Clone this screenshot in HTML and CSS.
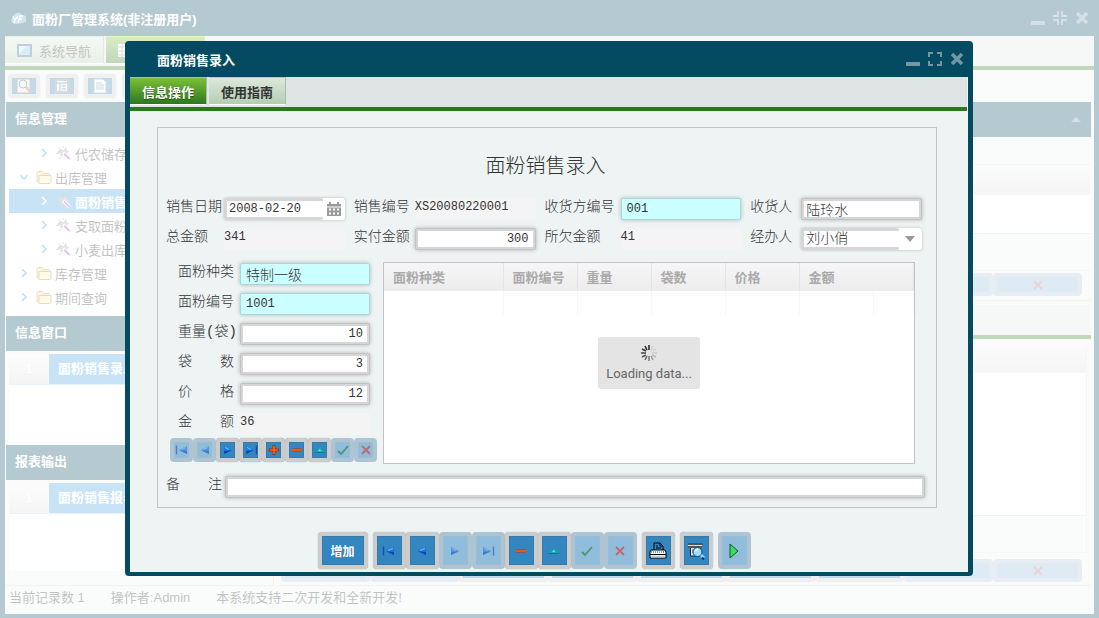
FILE: index.html
```html
<!DOCTYPE html>
<html lang="zh-CN">
<head>
  <meta charset="UTF-8">
  <meta name="viewport" content="width=device-width, initial-scale=1.0">
  <title>面粉厂管理系统</title>
  <link rel="stylesheet" href="styles.css">
</head>
<body>
  <svg class="sprite" aria-hidden="true">
    <symbol id="i-first" viewBox="0 0 14 14"><path d="M1.5 2.5v9" stroke="#0a50b8" stroke-width="1.4"/><path d="M4 7l8-4v8z" fill="#1878e8"/><path d="M4 7.200l8 3.800V8z" fill="#0848a8"/><path d="M6 6.500l5-2" stroke="#7cc0ff"/></symbol>
    <symbol id="i-prev" viewBox="0 0 14 14"><path d="M3 7l8-4v8z" fill="#1878e8"/><path d="M3 7.200l8 3.800V8z" fill="#0848a8"/><path d="M5 6.500l5-2" stroke="#7cc0ff"/></symbol>
    <symbol id="i-next" viewBox="0 0 14 14"><path d="M11 7L3 3v8z" fill="#1878e8"/><path d="M11 7.200L3 11V8z" fill="#0848a8"/><path d="M4 4.500l4 2" stroke="#7cc0ff"/></symbol>
    <symbol id="i-last" viewBox="0 0 14 14"><path d="M12.500 2.500v9" stroke="#0a50b8" stroke-width="1.4"/><path d="M10 7L2 3v8z" fill="#1878e8"/><path d="M10 7.200L2 11V8z" fill="#0848a8"/><path d="M3 4.500l4 2" stroke="#7cc0ff"/></symbol>
    <symbol id="i-add" viewBox="0 0 14 14"><path d="M7 2v10M2 7h10" stroke="#c22800" stroke-width="3"/><path d="M7 3v8M3 7h8" stroke="#ff7a10" stroke-width="1.200"/></symbol>
    <symbol id="i-del" viewBox="0 0 14 14"><path d="M2 7h10" stroke="#d02800" stroke-width="3"/><path d="M2 7h10" stroke="#ff8a18"/></symbol>
    <symbol id="i-edit" viewBox="0 0 14 14"><path d="M7 4.500L2 9.500h10z" fill="#10b0b8"/><path d="M2 9.500h10" stroke="#087880"/><path d="M7 6L5 8h3z" fill="#6ae8e8"/></symbol>
    <symbol id="i-ok" viewBox="0 0 14 14"><path d="M2 8l3 3 7-8" fill="none" stroke="#107820" stroke-width="1.800"/></symbol>
    <symbol id="i-cancel" viewBox="0 0 14 14"><path d="M3 3l8 8M11 3l-8 8" stroke="#e02818" stroke-width="1.800"/></symbol>
    <symbol id="i-print" viewBox="0 0 18 18"><path d="M5 8V1h6l3 3v4" fill="#3486c0" stroke="#000"/><path d="M11 1v3h3M7 4h2M7 6h5" fill="none" stroke="#000"/><path d="M2 8h14l1 2v6H1v-6z" fill="#fff" stroke="#000"/><path d="M2 10h14" stroke="#58b8e8" stroke-dasharray="1 1" stroke-width="2"/><path d="M1 12.500h16" stroke="#000"/><path d="M2 14.500h14" stroke="#ccc" stroke-width="2"/><path d="M14 10h1" stroke="#e02020"/></symbol>
    <symbol id="i-preview" viewBox="0 0 18 18"><path d="M1 2h15M1 5h14" stroke="#555" stroke-width="2"/><path d="M1 3.500h14" stroke="#ddd"/><path d="M3.500 6v8h10V6" fill="#dfe6ea" stroke="#222"/><path d="M5 8h3M5 10h2" stroke="#3486c0"/><circle cx="10.500" cy="10" r="4.500" fill="#9fdcff" stroke="#064c78"/><path d="M8 9l3-2" stroke="#fff" stroke-width="2"/><path d="M14 13l3 3" stroke="#8fd4ff" stroke-width="3"/><path d="M15 16l2 1" stroke="#062c48" stroke-width="2"/></symbol>
    <symbol id="i-run" viewBox="0 0 18 18"><path d="M5 2v14l8-7z" fill="#30e050" stroke="#0a4a20"/></symbol>
    <symbol id="i-min" viewBox="0 0 16 16"><path d="M1 13h14" stroke="currentColor" stroke-width="4"/></symbol>
    <symbol id="i-max" viewBox="0 0 16 16"><path d="M2 6V2h4M10 2h4v4M14 10v4h-4M6 14H2v-4" fill="none" stroke="currentColor" stroke-width="2"/></symbol>
    <symbol id="i-restore" viewBox="0 0 16 16"><path d="M6 1v5H1M10 1v5h5M10 15v-5h5M6 15v-5H1" fill="none" stroke="currentColor" stroke-width="2"/></symbol>
    <symbol id="i-close" viewBox="0 0 16 16"><path d="M3 3l10 10M13 3L3 13" stroke="currentColor" stroke-width="3.500"/></symbol>
    <symbol id="i-wand" viewBox="0 0 16 16"><path d="M2 5l3-2 2 2 3-4 1 4 3 0-3 3-1 2-3-1-2 4-1-5-3-1z" fill="#999"/><path d="M2 2l2 2M7 0v2M0 8h2M3 12l1 2" stroke="#777"/><path d="M7 7l7 7" stroke="#fff" stroke-width="4"/><path d="M8 8l6 6" stroke="#a03cd8" stroke-width="2"/></symbol>
    <symbol id="i-folder" viewBox="0 0 16 14"><path d="M1 11V2l1-1h4l2 2h5l1 1v8H2z" fill="#f5df90" stroke="#b08a30"/><path d="M3 5h12v7l-1 1H3z" fill="#fff0a8" stroke="#b08a30"/></symbol>
    <symbol id="i-chev" viewBox="0 0 8 8"><path d="M2 0l4 4-4 4" fill="none" stroke="currentColor" stroke-width="1.500"/></symbol>
  </svg>

  <div class="app">
    <header class="titlebar">
      <svg class="logo" viewBox="0 0 16 16"><path d="M4 14a4 4 0 0 1-1-7 5 5 0 0 1 9-2 4 4 0 0 1 1 8z" fill="#5fa8d8"/><path d="M3 6l2 4 3-4M5 10l-1 3M8 13l2-7h3M9 9h3" fill="none" stroke="#fff" stroke-width="1.500"/></svg>
      <h1>面粉厂管理系统(非注册用户)</h1>
      <div class="window-tools">
        <button aria-label="最小化"><svg><use href="#i-min"/></svg></button>
        <button aria-label="还原"><svg><use href="#i-restore"/></svg></button>
        <button aria-label="关闭"><svg><use href="#i-close"/></svg></button>
      </div>
    </header>
    <nav class="tabs">
      <button class="tab app-tab"><svg viewBox="0 0 15 13"><path d="M1 1h13v11H1z" fill="#7cc0ee" stroke="#2c5f88" stroke-width="2"/><path d="M2 2h8l-8 8z" fill="#c8e8fa"/></svg>系统导航</button>
      <button class="tab app-tab active" aria-label="信息管理"><svg viewBox="0 0 15 13"><path d="M0 0h15v13H0z" fill="#fff"/><path d="M0 3h15M0 7h15M0 11h15M4 0v13M8 0v13M12 0v13" stroke="#88a"/></svg></button>
    </nav>

    <main class="workspace">
      <aside class="sidebar">
        <div class="quickbar">
          <button class="btn quick" aria-label="查询"><svg viewBox="0 0 16 16"><path d="M1 1h13v14H1z" fill="#e8e8e0" stroke="#666"/><circle cx="7" cy="6" r="4" fill="#c8ecff" stroke="#456"/><path d="M10 9l4 5" stroke="#d86030" stroke-width="2.500"/></svg></button>
          <button class="btn quick" aria-label="表格"><svg viewBox="0 0 16 16"><path d="M2 2h12v12H2z" fill="#d8ecf8" stroke="#888" stroke-width="2"/><path d="M2 5h12M6 5v9M8 8h4M8 11h4" stroke="#467"/></svg></button>
          <button class="btn quick" aria-label="文档"><svg viewBox="0 0 16 16"><path d="M2 1h9l3 3v11H2z" fill="#f4faff" stroke="#78a"/><path d="M4 5h6M4 7h8M4 9h8M4 11h8" stroke="#58a"/></svg></button>
          <button class="btn quick" aria-label="打印"><svg><use href="#i-print"/></svg></button>
        </div>
        <h2 class="panel-title">信息管理</h2>
        <ul class="tree">
          <li class="leaf"><svg class="chev"><use href="#i-chev"/></svg><svg class="ico"><use href="#i-wand"/></svg><a href="#">代农储存</a></li>
          <li><svg class="chev open"><use href="#i-chev"/></svg><svg class="ico"><use href="#i-folder"/></svg><a href="#">出库管理</a></li>
          <li class="leaf selected"><svg class="chev"><use href="#i-chev"/></svg><svg class="ico"><use href="#i-wand"/></svg><a href="#">面粉销售</a></li>
          <li class="leaf"><svg class="chev"><use href="#i-chev"/></svg><svg class="ico"><use href="#i-wand"/></svg><a href="#">支取面粉</a></li>
          <li class="leaf"><svg class="chev"><use href="#i-chev"/></svg><svg class="ico"><use href="#i-wand"/></svg><a href="#">小麦出库</a></li>
          <li><svg class="chev"><use href="#i-chev"/></svg><svg class="ico"><use href="#i-folder"/></svg><a href="#">库存管理</a></li>
          <li><svg class="chev"><use href="#i-chev"/></svg><svg class="ico"><use href="#i-folder"/></svg><a href="#">期间查询</a></li>
        </ul>
        <h2 class="panel-title">信息窗口</h2>
        <div class="list">
          <div class="list-row"><span class="num">1</span><a href="#">面粉销售录入</a></div>
        </div>
        <h2 class="panel-title">报表输出</h2>
        <div class="list reports">
          <div class="list-row"><span class="num">1</span><a href="#">面粉销售报表</a></div>
        </div>
      </aside>

      <section class="content">
        <div class="content-gap"></div>
        <h2 class="panel-title collapse"><span class="arrow-up"></span></h2>
        <div class="upper">
          <div class="grid-bar"></div>
          <div class="grid-head"></div>
          <div class="grid-rows short"></div>
          <div class="grid-foot"></div>
          <div class="record-bar">
            <button class="btn" aria-label="首条"><svg><use href="#i-first"/></svg></button>
            <button class="btn" aria-label="上条"><svg><use href="#i-prev"/></svg></button>
            <button class="btn" aria-label="下条"><svg><use href="#i-next"/></svg></button>
            <button class="btn" aria-label="末条"><svg><use href="#i-last"/></svg></button>
            <button class="btn" aria-label="增加"><svg><use href="#i-add"/></svg></button>
            <button class="btn" aria-label="删除"><svg><use href="#i-del"/></svg></button>
            <button class="btn" aria-label="修改"><svg><use href="#i-edit"/></svg></button>
            <button class="btn" disabled aria-label="保存"></button>
            <button class="btn" disabled aria-label="取消"><svg><use href="#i-cancel"/></svg></button>
          </div>
        </div>
        <div class="tabs sub"></div>
        <div class="lower">
          <div class="grid-head"></div>
          <div class="grid-rows"></div>
          <div class="grid-foot"></div>
        </div>
        <div class="record-bar">
          <button class="btn" disabled aria-label="首条"></button>
          <button class="btn" disabled aria-label="上条"></button>
          <button class="btn" aria-label="下条"></button>
          <button class="btn" aria-label="末条"></button>
          <button class="btn" aria-label="增加"></button>
          <button class="btn" aria-label="删除"></button>
          <button class="btn" aria-label="修改"></button>
          <button class="btn" disabled aria-label="保存"></button>
          <button class="btn" disabled aria-label="取消"><svg><use href="#i-cancel"/></svg></button>
        </div>
      </section>
    </main>

    <footer class="statusbar">
      <span>当前记录数 1</span>
      <span>操作者:Admin</span>
      <span>本系统支持二次开发和全新开发!</span>
    </footer>
  </div>

  <div class="mask">
    <div class="dialog" role="dialog" aria-labelledby="dlg-title">
      <header class="dialog-head">
        <h2 id="dlg-title">面粉销售录入</h2>
        <div class="window-tools">
          <button aria-label="最小化"><svg><use href="#i-min"/></svg></button>
          <button aria-label="最大化"><svg><use href="#i-max"/></svg></button>
          <button aria-label="关闭"><svg><use href="#i-close"/></svg></button>
        </div>
      </header>
      <div class="dialog-body">
        <nav class="tabs">
          <button class="tab active">信息操作</button>
          <button class="tab">使用指南</button>
        </nav>
        <form class="sheet">
          <h3>面粉销售录入</h3>
          <div class="fields">
            <label for="date">销售日期</label>
            <div class="combo"><input id="date" type="text" value="2008-02-20"><button type="button" aria-label="选择日期"><svg class="cal" viewBox="0 0 16 16"><path d="M1 3h14v12H1z" fill="#999"/><path d="M1 6h14" stroke="#fff"/><path d="M4 1v3M12 1v3" stroke="#999" stroke-width="2"/><path d="M3 8.500h10M3 12.500h10" stroke="#fff" stroke-width="2" stroke-dasharray="2 2"/></svg></button></div>
            <label for="no">销售编号</label>
            <output id="no">XS20080220001</output>
            <label for="party">收货方编号</label>
            <input id="party" class="key" type="text" value="001">
            <label for="receiver">收货人</label>
            <input id="receiver" type="text" value="陆玲水">

            <label for="total">总金额</label>
            <output id="total">341</output>
            <label for="paid">实付金额</label>
            <input id="paid" class="number" type="text" value="300">
            <label for="owed">所欠金额</label>
            <output id="owed">41</output>
            <label for="agent">经办人</label>
            <div class="combo drop"><select id="agent"><option>刘小俏</option></select></div>
          </div>

          <div class="detail">
            <div class="detail-form">
              <div class="line"><label for="kind">面粉种类</label><input id="kind" class="key" type="text" value="特制一级"></div>
              <div class="line"><label for="code">面粉编号</label><input id="code" class="key" type="text" value="1001"></div>
              <div class="line"><label for="weight">重量(袋)</label><input id="weight" class="number" type="text" value="10"></div>
              <div class="line"><label for="bags" class="spread">袋数</label><input id="bags" class="number" type="text" value="3"></div>
              <div class="line"><label for="price" class="spread">价格</label><input id="price" class="number" type="text" value="12"></div>
              <div class="line"><label for="amount" class="spread">金额</label><output id="amount">36</output></div>
              <div class="mini-bar">
                <button type="button" class="btn" disabled aria-label="首条"><svg><use href="#i-first"/></svg></button>
                <button type="button" class="btn" disabled aria-label="上条"><svg><use href="#i-prev"/></svg></button>
                <button type="button" class="btn" aria-label="下条"><svg><use href="#i-next"/></svg></button>
                <button type="button" class="btn" aria-label="末条"><svg><use href="#i-last"/></svg></button>
                <button type="button" class="btn" aria-label="增加"><svg><use href="#i-add"/></svg></button>
                <button type="button" class="btn" aria-label="删除"><svg><use href="#i-del"/></svg></button>
                <button type="button" class="btn" aria-label="修改"><svg><use href="#i-edit"/></svg></button>
                <button type="button" class="btn" disabled aria-label="保存"><svg><use href="#i-ok"/></svg></button>
                <button type="button" class="btn" disabled aria-label="取消"><svg><use href="#i-cancel"/></svg></button>
              </div>
            </div>
            <div class="detail-grid">
              <table>
                <colgroup><col class="c-kind"><col class="c-num"><col class="c-num"><col class="c-num"><col class="c-num"><col class="c-num"><col></colgroup>
                <thead>
                  <tr><th>面粉种类</th><th>面粉编号</th><th>重量</th><th>袋数</th><th>价格</th><th colspan="2">金额</th></tr>
                </thead>
                <tbody>
                  <tr><td></td><td></td><td></td><td></td><td></td><td></td><td></td></tr>
                </tbody>
              </table>
              <div class="loading">
                <svg viewBox="0 0 16 16" stroke-width="1.500"><path d="M8 0v5" stroke="#222"/><path d="M4 1l2 4" stroke="#222"/><path d="M1 4l4 2" stroke="#333"/><path d="M0 8h5" stroke="#444"/><path d="M1 12l4-2" stroke="#555"/><path d="M4 15l2-4" stroke="#666"/><path d="M8 16v-5" stroke="#777"/><path d="M12 15l-2-4" stroke="#999"/><path d="M15 12l-4-2" stroke="#bbb"/><path d="M16 8h-5" stroke="#ccc"/><path d="M15 4l-4 2M12 1l-2 4" stroke="#d4d4d4"/></svg>
                <span>Loading data...</span>
              </div>
            </div>
          </div>

          <div class="memo">
            <label for="memo" class="spread">备注</label>
            <input id="memo" type="text">
          </div>
        </form>

        <div class="actions">
          <div class="group"><button class="btn text">增加</button></div>
          <div class="group">
            <button class="btn" aria-label="首条"><svg><use href="#i-first"/></svg></button>
            <button class="btn" aria-label="上条"><svg><use href="#i-prev"/></svg></button>
            <button class="btn" disabled aria-label="下条"><svg><use href="#i-next"/></svg></button>
            <button class="btn" disabled aria-label="末条"><svg><use href="#i-last"/></svg></button>
            <button class="btn" aria-label="删除"><svg><use href="#i-del"/></svg></button>
            <button class="btn" aria-label="修改"><svg><use href="#i-edit"/></svg></button>
            <button class="btn" disabled aria-label="保存"><svg><use href="#i-ok"/></svg></button>
            <button class="btn" disabled aria-label="取消"><svg><use href="#i-cancel"/></svg></button>
          </div>
          <div class="group"><button class="btn" aria-label="打印"><svg class="big"><use href="#i-print"/></svg></button></div>
          <div class="group"><button class="btn" aria-label="预览"><svg class="big"><use href="#i-preview"/></svg></button></div>
          <div class="group"><button class="btn" disabled aria-label="运行"><svg class="big solid"><use href="#i-run"/></svg></button></div>
        </div>
      </div>
    </div>
  </div>
</body>
</html>
```
FILE: styles.css
```css
* {
  box-sizing: border-box;
}
body {
  margin: 0;
  font-family: "Liberation Sans", "Noto Sans CJK SC", sans-serif;
  font-size: 13px;
  color: #333;
}
h1, h2, h3, ul {
  margin: 0;
  padding: 0;
}
button {
  font-family: inherit;
}
.sprite {
  display: none;
}

/* main window */
.app {
  display: flex;
  flex-direction: column;
  height: 100vh;
  overflow: hidden;
  border: solid #044b61;
  border-width: 0 5px 4px;
  background: #eef3f4;
}
.titlebar, .dialog-head {
  display: flex;
  align-items: center;
  background: #044b61;
}
.titlebar {
  height: 36px;
  padding: 0 4px 0 5px;
}
.titlebar h1, .dialog-head h2 {
  flex: 1;
  font-size: 13px;
  color: #fff;
}
.logo {
  width: 16px;
  height: 16px;
  margin-right: 6px;
}
.window-tools {
  display: flex;
  gap: 6px;
}
.window-tools button {
  padding: 0;
  border: 0;
  background: none;
  color: #7397a5;
}
.window-tools svg {
  display: block;
  width: 16px;
  height: 16px;
}

.tabs {
  display: flex;
  flex-shrink: 0;
  gap: 2px;
  height: 34px;
  border-bottom: 4px solid #2c781f;
  background: #dfe5e4;
}
.tab {
  height: 28px;
  padding: 0 12px;
  border: 0;
  border-top: 1px solid #b8cdb8;
  border-bottom: 1px solid #fff;
  border-right: 1px solid #a5bda5;
  background: linear-gradient(#dce8dc, #b4cdb2);
  color: #333;
  font-size: 13px;
  font-weight: bold;
}
.tab.active {
  border-top-color: #a0e020;
  background: linear-gradient(#7cc038, #2c781f);
  color: #fff;
  text-shadow: 0 1px 1px #225010;
}
.app-tab {
  display: flex;
  align-items: center;
  gap: 7px;
  width: 99px;
  font-weight: normal;
  white-space: nowrap;
}
.app-tab svg {
  flex-shrink: 0;
  width: 15px;
  height: 13px;
}

.workspace {
  display: grid;
  grid-template-columns: 268px 1fr;
  gap: 4px;
  flex: 1;
  min-height: 0;
  padding: 0 3px 0 1px;
}
.sidebar, .content {
  display: flex;
  flex-direction: column;
  border: 1px solid #d0d6d6;
  border-width: 0 1px 1px 0;
}
.content {
  border-right: 0;
}
.quickbar {
  display: flex;
  gap: 6px;
  padding: 4px 2px;
}
.panel-title {
  height: 35px;
  padding-left: 9px;
  background: #044b61;
  color: #fff;
  font-size: 13px;
  line-height: 34px;
}
.tree {
  padding: 4px 3px 7px;
  background: #fff;
  list-style: none;
}
.tree li {
  display: flex;
  align-items: center;
  height: 24px;
  padding-left: 11px;
}
.tree li.leaf {
  padding-left: 31px;
}
.tree a, .list a {
  color: inherit;
  text-decoration: none;
}
.chev {
  width: 8px;
  height: 8px;
  margin-right: 8px;
  color: #10a0e0;
}
.chev.open {
  transform: rotate(90deg);
}
.ico {
  width: 16px;
  height: 15px;
  margin-right: 3px;
}
.selected {
  background: #48a1e1;
  color: #fff;
  font-weight: bold;
}
.selected .chev {
  color: #fff;
}
.list {
  min-height: 88px;
  margin: 3px;
  background: #fff;
}
.reports {
  flex: 1;
  margin-bottom: 14px;
}
.list-row {
  display: grid;
  grid-template-columns: 40px 1fr;
  height: 31px;
  line-height: 29px;
  border-bottom: 1px solid #b8d8f0;
  background: #48a1e1;
  color: #fff;
}
.list-row a {
  padding-left: 9px;
  font-weight: bold;
}
.num {
  background: linear-gradient(#f6f6f6, #dcdcdc);
  text-align: center;
}

.content-gap {
  height: 32px;
}
.collapse {
  display: flex;
  align-items: center;
  justify-content: flex-end;
  padding-right: 10px;
}
.arrow-up {
  border: 5px solid transparent;
  border-top: 0;
  border-bottom-color: #7397a5;
}
.upper {
  border-bottom: 1px solid #d0d6d6;
  padding-bottom: 4px;
}
.grid-bar {
  height: 28px;
  border-bottom: 1px solid #dde2e2;
}
.grid-head {
  height: 30px;
  background: linear-gradient(#f2f2f2, #dedede);
}
.grid-rows {
  flex: 1;
  border-bottom: 1px solid #d0d6d6;
  background: #fff;
}
.grid-rows.short {
  height: 39px;
}
.grid-foot {
  height: 37px;
  border-bottom: 1px solid #dde2e2;
}
.sub {
  margin-top: 4px;
}
.lower {
  display: flex;
  flex-direction: column;
  flex: 1;
  margin: 4px 4px 4px 3px;
  border-right: 1px solid #dde2e2;
}
.record-bar {
  display: flex;
  height: 25px;
  padding: 2px 9px 0 3px;
}
.content > .record-bar {
  height: 28px;
  padding-bottom: 3px;
}
.record-bar .btn {
  flex: 1;
}
.statusbar {
  display: flex;
  gap: 26px;
  height: 28px;
  padding-left: 4px;
  line-height: 24px;
}

/* framed blue buttons */
.btn {
  display: flex;
  align-items: center;
  justify-content: center;
  padding: 0;
  border: 4px solid #cccccc;
  border-radius: 4px;
  background: #3486c0;
  box-shadow: inset 0 0 0 1px #3a7aa8, 0 0 1px #6aa0c0;
  color: #fff;
}
.btn svg {
  flex-shrink: 0;
  width: 14px;
  height: 14px;
}
.btn:disabled {
  border-color: #aec4d2;
  background: #91bddc;
  box-shadow: inset 0 0 0 1px #9cbcd2;
}
.btn:disabled svg {
  opacity: 0.55;
}
.btn:disabled svg.solid {
  opacity: 0.9;
}
.quick {
  width: 32px;
  height: 24px;
}
.quick svg {
  width: 16px;
  height: 16px;
}

/* sales entry dialog */
.mask {
  position: fixed;
  inset: 0;
  display: flex;
  padding: 41px 126px 42px 125px;
  background: rgba(255, 255, 255, 0.7);
}
.dialog {
  display: flex;
  flex-direction: column;
  flex: 1;
  border-radius: 4px;
  background: #044b61;
  padding: 0 5px 4px;
}
.dialog-head {
  height: 36px;
  padding: 0 3px 0 27px;
}
.dialog-body {
  flex: 1;
  background: #eef3f4;
}
.dialog-body .tabs {
  margin-right: 1px;
}
.dialog-body .tab {
  width: 77px;
}
.sheet {
  margin: 16px 31px 24px 27px;
  padding: 23px 11px 9px 8px;
  border: 1px solid #c0c4c5;
  font-family: "Liberation Mono", "Noto Sans CJK SC", monospace;
  font-size: 12px;
}
.sheet h3 {
  margin-bottom: 19px;
  font-family: "Noto Sans CJK SC", sans-serif;
  font-size: 20px;
  font-weight: 300;
  line-height: 28px;
  text-align: center;
}
.sheet label {
  font-size: 14px;
  font-weight: 300;
  line-height: 18px;
  white-space: nowrap;
}
.sheet .spread {
  text-align: justify;
  text-align-last: justify;
}
.fields {
  display: grid;
  grid-template-columns: 58px 1fr 70px 1fr 85px 1fr 60px 1fr;
  row-gap: 8px;
  padding-right: 3px;
}
.fields label:not(:nth-child(8n+1)) {
  padding-left: 9px;
}
.sheet input, .sheet select, .sheet output {
  width: 100%;
  min-width: 0;
  height: 22px;
  margin: 0;
  font: inherit;
  font-size: 12px;
  color: #333;
}
.sheet input, .sheet select {
  border: 3px solid #d6d6d6;
  border-radius: 2px;
  outline: 1px solid #c2c2c2;
  outline-offset: -1px;
  box-shadow: 0 0 4px rgba(0, 0, 0, 0.25);
  background: #fff;
  padding: 0 2px;
}
.sheet input.key {
  border: 1px solid #a8d8d8;
  outline: 0;
  padding: 0 5px;
  background: #ccffff;
}
.sheet input.number {
  padding-right: 4px;
  text-align: right;
}
#kind, #receiver, #agent {
  font-size: 14px;
  font-weight: 300;
}
.sheet output {
  background: #f4f4f4;
  line-height: 18px;
}
.combo {
  display: flex;
  height: 22px;
  border-radius: 3px;
  background: #fff;
  box-shadow: 0 0 3px rgba(0, 0, 0, 0.25);
}
.sheet .combo input, .sheet .combo select {
  border-right: 0;
  outline: 0;
  box-shadow: none;
}
.combo button {
  flex: 0 0 22px;
  padding: 0;
  border: 0;
  background: none;
}
.cal {
  display: block;
  width: 16px;
  height: 16px;
  margin: 0 auto;
}
.combo select {
  appearance: none;
}
.drop::after {
  content: "";
  flex-shrink: 0;
  align-self: center;
  margin: 0 7px 0 6px;
  border: 5px solid transparent;
  border-top: 6px solid #999;
  border-bottom: 0;
}

.detail {
  display: flex;
  gap: 13px;
  margin-top: 12px;
  padding-right: 10px;
}
.detail-form {
  flex: 0 0 204px;
}
.line {
  display: grid;
  grid-template-columns: 56px 1fr;
  column-gap: 6px;
  height: 30px;
  padding: 1px 0 0 12px;
}
.mini-bar {
  display: flex;
  margin: -4px -8px 2px 4px;
}
.mini-bar .btn {
  flex: 0 0 23px;
  height: 24px;
}
.detail-grid {
  display: flex;
  flex-direction: column;
  flex: 1;
  min-width: 0;
  border: 1px solid #c0c4c5;
  background: #fff;
}
.detail-grid table {
  width: 100%;
  table-layout: fixed;
  border-collapse: collapse;
  font-family: "Noto Sans CJK SC", sans-serif;
}
.c-kind {
  width: 119px;
}
.c-num {
  width: 74px;
}
.detail-grid th {
  height: 28px;
  padding: 0 9px;
  border-right: 1px solid #e4e4e4;
  background: linear-gradient(#f6f6f6, #ececec);
  color: #aaa;
  font-size: 13px;
  line-height: 28px;
  text-align: left;
}
.detail-grid td {
  height: 24px;
  border-right: 1px solid #f8f8f8;
}
.loading {
  display: flex;
  flex-direction: column;
  align-items: center;
  gap: 4px;
  width: 102px;
  height: 52px;
  margin: 22px auto 0;
  padding-top: 8px;
  border-radius: 3px;
  background: #e4e4e4;
  color: #666;
  font-family: Roboto, sans-serif;
  font-size: 13px;
  line-height: 18px;
}
.loading svg {
  width: 16px;
  height: 16px;
}
.memo {
  display: grid;
  grid-template-columns: 56px 1fr;
  column-gap: 3px;
  margin-top: 12px;
}

.actions {
  display: flex;
  justify-content: center;
  gap: 5px;
  padding-right: 30px;
}
.group {
  display: flex;
}
.actions .btn {
  width: 33px;
  height: 37px;
}
.actions .btn.text {
  width: 50px;
  font-size: 12px;
  font-weight: bold;
}
.actions svg.big {
  width: 18px;
  height: 18px;
}
```
